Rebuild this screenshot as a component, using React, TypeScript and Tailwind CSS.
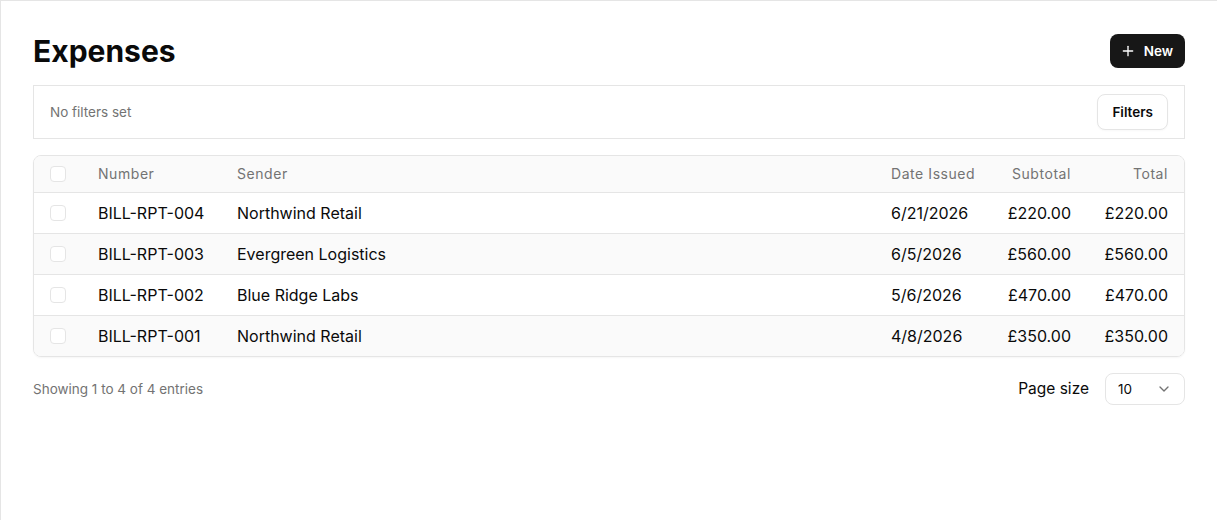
import { ChevronDown, Plus } from "lucide-react";

type Expense = {
  number: string;
  sender: string;
  issued: string;
  subtotal: string;
  total: string;
};

const expenses: Expense[] = [
  { number: "BILL-RPT-004", sender: "Northwind Retail", issued: "6/21/2026", subtotal: "£220.00", total: "£220.00" },
  { number: "BILL-RPT-003", sender: "Evergreen Logistics", issued: "6/5/2026", subtotal: "£560.00", total: "£560.00" },
  { number: "BILL-RPT-002", sender: "Blue Ridge Labs", issued: "5/6/2026", subtotal: "£470.00", total: "£470.00" },
  { number: "BILL-RPT-001", sender: "Northwind Retail", issued: "4/8/2026", subtotal: "£350.00", total: "£350.00" }
];

const gridCols = "grid grid-cols-[48px_139px_1fr_115px_97px_97px] items-center";

function Checkbox() {
  return <span className="block h-4 w-4 rounded-[4px] border border-[#e5e5e5] bg-white" aria-hidden />;
}

export default function App() {
  return (
    <div className="min-h-[520px] border-l border-t border-[#e5e5e5] bg-white px-8 pt-8 font-['Inter',sans-serif] text-[#0a0a0a]">
      <div className="flex items-center justify-between">
        <h1 className="text-[30px] font-bold leading-9">Expenses</h1>
        <button
          type="button"
          className="flex h-[34px] items-center gap-2 rounded-lg bg-[#171717] pl-2.5 pr-3 text-[13.5px] font-semibold text-white"
        >
          <Plus className="h-4 w-4" strokeWidth={2} />
          New
        </button>
      </div>

      <div className="mt-4 flex items-center justify-between border border-[#e5e5e5] px-4 py-2">
        <span className="text-[13.5px] text-[#737373]">No filters set</span>
        <button
          type="button"
          className="h-9 rounded-lg border border-[#e5e5e5] bg-white px-3.5 text-[13.5px] font-semibold shadow-[0_1px_2px_rgba(0,0,0,0.03)]"
        >
          Filters
        </button>
      </div>

      <div className="mt-4 overflow-hidden rounded-lg border border-[#e5e5e5] shadow-[0_1px_2px_rgba(0,0,0,0.04)]">
        <div className={`${gridCols} h-[37px] whitespace-nowrap border-b border-[#e5e5e5] bg-[#fafafa] text-sm tracking-[0.04em] text-[#737373]`}>
          <div className="pl-4">
            <Checkbox />
          </div>
          <div className="px-4">Number</div>
          <div className="px-4">Sender</div>
          <div className="pl-4">Date Issued</div>
          <div className="px-4 text-right">Subtotal</div>
          <div className="px-4 text-right">Total</div>
        </div>
        {expenses.map((expense, index) => (
          <div
            key={expense.number}
            className={`${gridCols} text-base ${index < expenses.length - 1 ? "h-[41px] border-b border-[#e5e5e5]" : "h-10"} ${index % 2 === 1 ? "bg-[#fafafa]" : "bg-white"}`}
          >
            <div className="pl-4">
              <Checkbox />
            </div>
            <div className="px-4">{expense.number}</div>
            <div className="px-4">{expense.sender}</div>
            <div className="px-4">{expense.issued}</div>
            <div className="px-4 text-right">{expense.subtotal}</div>
            <div className="px-4 text-right">{expense.total}</div>
          </div>
        ))}
      </div>

      <div className="mt-4 flex items-center justify-between">
        <span className="text-[13.5px] text-[#737373]">Showing 1 to 4 of 4 entries</span>
        <div className="flex items-center gap-4">
          <span className="text-[15.5px]">Page size</span>
          <button
            type="button"
            className="flex h-8 w-20 items-center justify-between rounded-lg border border-[#e5e5e5] bg-white px-3 text-[13.5px]"
          >
            10
            <ChevronDown className="h-4 w-4 text-[#737373]" />
          </button>
        </div>
      </div>
    </div>
  );
}
